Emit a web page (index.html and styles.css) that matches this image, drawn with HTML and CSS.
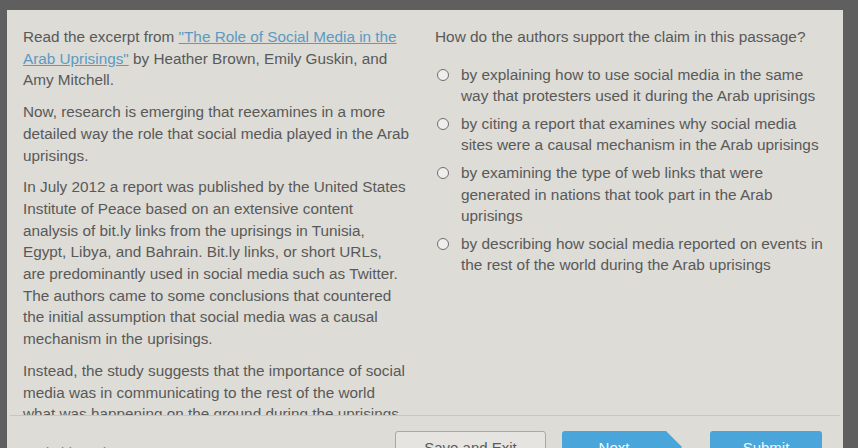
FILE: index.html
```html
<!DOCTYPE html>
<html>
<head>
<meta charset="utf-8">
<link rel="stylesheet" href="styles.css">
</head>
<body>
<div class="panel">
  <div class="scroll">
    <div class="passage">
      <p>Read the excerpt from <a class="link">"The Role of Social Media in the Arab Uprisings"</a> by Heather Brown, Emily Guskin, and Amy Mitchell.</p>
      <p>Now, research is emerging that reexamines in a more detailed way the role that social media played in the Arab uprisings.</p>
      <p>In July 2012 a report was published by the United States Institute of Peace based on an extensive content analysis of bit.ly links from the uprisings in Tunisia, Egypt, Libya, and Bahrain. Bit.ly links, or short URLs,<br>are predominantly used in social media such as Twitter. The authors came to some conclusions that countered the initial assumption that social media was a causal mechanism in the uprisings.</p>
      <p>Instead, the study suggests that the importance of social media was in communicating to the rest of the world what was happening on the ground during the uprisings.</p>
    </div>
    <div class="question">
      <p class="prompt">How do the authors support the claim in this passage?</p>
      <ul class="options">
        <li class="option"><span class="radio"></span><span class="label">by explaining how to use social media in the same way that protesters used it during the Arab uprisings</span></li>
        <li class="option"><span class="radio"></span><span class="label">by citing a report that examines why social media sites were a causal mechanism in the Arab uprisings</span></li>
        <li class="option"><span class="radio"></span><span class="label">by examining the type of web links that were generated in nations that took part in the Arab uprisings</span></li>
        <li class="option"><span class="radio"></span><span class="label">by describing how social media reported on events in the rest of the world during the Arab uprisings</span></li>
      </ul>
    </div>
  </div>
  <div class="footer">
    <span class="mark">Mark this and return</span>
    <div class="buttons">
      <button class="btn btn-save">Save and Exit</button>
      <button class="btn btn-next">Next</button>
      <button class="btn btn-submit">Submit</button>
    </div>
  </div>
</div>
</body>
</html>
```
FILE: styles.css
```css
html, body {
  margin: 0;
  padding: 0;
}
body {
  background: #5f5f5f;
  width: 858px;
  height: 448px;
  overflow: hidden;
  font-family: "Liberation Sans", Arial, sans-serif;
  color: #595957;
}
.panel {
  margin: 10px 0 0 7px;
  width: 836px;
  height: 438px;
  background: #dddcd7;
  display: flex;
  flex-direction: column;
}
.scroll {
  flex: none;
  height: 406px;
  overflow: hidden;
  display: flex;
  border-bottom: 1px solid #c6c5c0;
  margin: 0 3px;
  box-sizing: border-box;
}
.passage {
  flex: none;
  width: 387px;
  padding: 16px 5px 0 13px;
  font-size: 15.3px;
  line-height: 21.7px;
}
.passage p {
  margin: 0 0 10px;
}
.link {
  color: #5b9ac2;
  text-decoration: underline;
}
.question {
  flex: none;
  margin-left: 20px;
  width: 400px;
  padding-top: 16px;
  font-size: 15.4px;
  line-height: 21.6px;
}
.prompt {
  margin: 0 0 16px;
}
.options {
  list-style: none;
  margin: 0;
  padding: 0;
}
.option {
  display: flex;
  align-items: flex-start;
  margin-bottom: 6px;
}
.radio {
  flex: none;
  width: 10px;
  height: 10px;
  border: 1.5px solid #6f6f6d;
  border-radius: 50%;
  background: #eeeeec;
  margin: 5px 0 0 2px;
}
.label {
  margin-left: 12px;
  width: 368px;
}
.footer {
  flex: none;
  display: flex;
  align-items: flex-start;
  padding: 15px 21px 0 15px;
}
.mark {
  font-size: 14px;
  color: #7a7a78;
  margin-top: 14px;
}
.buttons {
  margin-left: auto;
  display: flex;
}
.btn {
  height: 32px;
  font-family: "Liberation Sans", Arial, sans-serif;
  font-size: 15px;
  border-radius: 3px;
  padding: 0;
}
.btn-save {
  width: 151px;
  background: #e5e4e0;
  border: 1px solid #a9a8a4;
  color: #5b5b59;
}
.btn-next {
  width: 120px;
  margin-left: 16px;
  padding-right: 16px;
  background: #4aa6da;
  border: none;
  color: #f2f8fc;
  clip-path: polygon(0 0, calc(100% - 16px) 0, 100% 50%, calc(100% - 16px) 100%, 0 100%);
}
.btn-submit {
  width: 112px;
  margin-left: 28px;
  background: #4aa6da;
  border: none;
  color: #f2f8fc;
}
```
